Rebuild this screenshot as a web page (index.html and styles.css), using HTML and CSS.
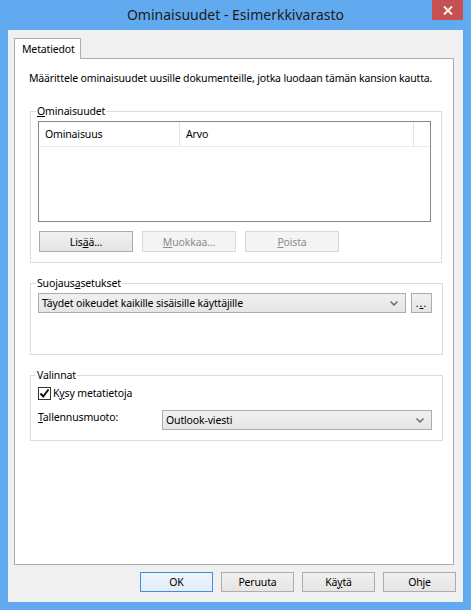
FILE: index.html
```html
<!DOCTYPE html>
<html lang="fi">
<head>
    <meta charset="UTF-8">
    <title>Ominaisuudet - Esimerkkivarasto</title>
    <link rel="stylesheet" href="styles.css">
</head>
<body>
    <div class="window">
        <div class="titlebar">
            <span></span>
            <div class="title">Ominaisuudet - Esimerkkivarasto</div>
            <button class="close" title="Sulje">
                <svg width="10" height="9" viewBox="0 0 10 9"><path d="M1 0.5 L9 8.5 M9 0.5 L1 8.5" stroke="#fff" stroke-width="1.8" fill="none"/></svg>
            </button>
        </div>

        <div class="client">
            <div class="tabs">
                <div class="tab">Metatiedot</div>
            </div>

            <div class="panel">
                <p class="intro">Määrittele ominaisuudet uusille dokumenteille, jotka luodaan tämän kansion kautta.</p>

                <fieldset class="group">
                    <legend><u>O</u>minaisuudet</legend>
                    <div class="listview">
                        <div class="lv-header">
                            <div class="lv-col col-name">Ominaisuus</div>
                            <div class="lv-col col-value">Arvo</div>
                            <div class="lv-col col-rest"></div>
                        </div>
                    </div>
                    <div class="btn-row">
                        <button class="btn btn-wide">Lis<u>ä</u>ä...</button>
                        <button class="btn btn-wide" disabled><u>M</u>uokkaa...</button>
                        <button class="btn btn-wide" disabled><u>P</u>oista</button>
                    </div>
                </fieldset>

                <fieldset class="group group-security">
                    <legend>Suojaus<u>a</u>setukset</legend>
                    <div class="combo-row">
                        <div class="combo combo-security">
                            <span>Täydet oikeudet kaikille sisäisille käyttäjille</span>
                            <svg class="chevron" width="8" height="5" viewBox="0 0 8 5"><path d="M0.5 0.5 L4 4 L7.5 0.5" stroke="#6d6d6d" stroke-width="1.5" fill="none"/></svg>
                        </div>
                        <button class="btn btn-dots">.<u>.</u>.</button>
                    </div>
                </fieldset>

                <fieldset class="group group-options">
                    <legend>Valinnat</legend>
                    <label class="check-row">
                        <span class="checkbox">
                            <svg width="11" height="11" viewBox="0 0 11 11"><path d="M1.5 5.5 L4.2 8.5 L9.5 1.5" stroke="#111" stroke-width="2" fill="none"/></svg>
                        </span>
                        <span>K<u>y</u>sy metatietoja</span>
                    </label>
                    <div class="field-row">
                        <span class="field-label"><u>T</u>allennusmuoto:</span>
                        <div class="combo combo-format">
                            <span>Outlook-viesti</span>
                            <svg class="chevron" width="8" height="5" viewBox="0 0 8 5"><path d="M0.5 0.5 L4 4 L7.5 0.5" stroke="#6d6d6d" stroke-width="1.5" fill="none"/></svg>
                        </div>
                    </div>
                </fieldset>
            </div>

            <div class="dialog-buttons">
                <button class="btn btn-default">OK</button>
                <button class="btn">Peruuta</button>
                <button class="btn">Kä<u>y</u>tä</button>
                <button class="btn">Ohje</button>
            </div>
        </div>
    </div>
</body>
</html>
```

FILE: styles.css
```css
body {
    margin: 0;
    font-family: "Noto Sans", "Open Sans", sans-serif;
    font-size: 10.5px;
    letter-spacing: -0.15px;
    color: #000;
    background-color: #fff;
}

.window {
    width: 471px;
    height: 610px;
    display: flex;
    flex-direction: column;
    box-sizing: border-box;
    background-color: #62aaf0;
    padding: 0 8px 8px 8px;
}

.titlebar {
    height: 30px;
    display: grid;
    grid-template-columns: 1fr auto 1fr;
    align-items: start;
}

.title {
    font-size: 14px;
    letter-spacing: 0;
    line-height: 30px;
    color: #1b1b1b;
    white-space: nowrap;
}

.close {
    justify-self: end;
    width: 31px;
    height: 20px;
    padding: 0;
    border: none;
    background-color: #c75050;
    display: flex;
    align-items: center;
    justify-content: center;
}

.client {
    flex: 1;
    display: flex;
    flex-direction: column;
    background-color: #f0f0f0;
    padding: 8px 7px 10px 6px;
}

.tabs {
    display: flex;
    height: 20px;
}

.tab {
    width: 67px;
    height: 21px;
    box-sizing: border-box;
    border: 1px solid #adadad;
    border-bottom: none;
    background-color: #fff;
    padding-left: 7px;
    line-height: 20px;
    position: relative;
    z-index: 1;
}

.panel {
    flex: 1;
    margin-right: 2px;
    background-color: #fff;
    border: 1px solid #adadad;
    padding: 11px 11px 0 15px;
}

.intro {
    margin: 0 0 17px -1px;
    line-height: 16px;
    white-space: nowrap;
}

.group {
    margin: 0;
    border: 1px solid #dcdcdc;
    padding: 0 10px 10px 7px;
}

.group + .group {
    margin-top: 12px;
}

.group legend {
    padding: 0 1px;
    margin-left: -2px;
    line-height: 16px;
}

.group-security {
    padding-bottom: 41px;
}

.listview {
    margin-top: 2px;
    height: 101px;
    box-sizing: border-box;
    border: 1px solid #828790;
    background-color: #fff;
}

.lv-header {
    display: flex;
    height: 24px;
    border-bottom: 1px solid #eaeaea;
}

.lv-col {
    line-height: 24px;
    padding-left: 6px;
    border-right: 1px solid #e5e5e5;
}

.col-name {
    width: 134px;
}

.col-value {
    width: 227px;
}

.col-rest {
    flex: 1;
    border-right: none;
}

.btn-row {
    display: flex;
    gap: 9px;
    margin-top: 9px;
    padding-left: 1px;
}

.btn {
    font-family: inherit;
    font-size: 10.5px;
    letter-spacing: -0.15px;
    color: #000;
    height: 20px;
    width: 73px;
    padding: 0;
    border: 1px solid #acacac;
    background: linear-gradient(#f0f0f0, #e5e5e5);
}

.btn-wide {
    width: 94px;
    height: 21px;
}

.btn:disabled {
    color: #8d8d8d;
    border-color: #d9d9d9;
    background: #f4f4f4;
}

.btn-default {
    border-color: #3d8ee0;
    background: linear-gradient(#eef4fb, #e3edf8);
}

.combo-row {
    display: flex;
    gap: 5px;
    margin-top: 2px;
}

.combo {
    height: 20px;
    box-sizing: border-box;
    border: 1px solid #acacac;
    background: linear-gradient(#f0f0f0, #e5e5e5);
    display: flex;
    align-items: center;
    justify-content: space-between;
    padding: 0 7px 0 3px;
    line-height: 18px;
}

.combo-security {
    width: 368px;
}

.combo-format {
    width: 270px;
}

.btn-dots {
    width: 21px;
    height: 20px;
    line-height: 14px;
    letter-spacing: 1px;
}

.check-row {
    display: flex;
    align-items: center;
    gap: 2px;
    margin-top: 2px;
    line-height: 16px;
}

.checkbox {
    width: 13px;
    height: 13px;
    box-sizing: border-box;
    border: 1px solid #333;
    background-color: #fff;
    display: flex;
    align-items: center;
    justify-content: center;
}

.field-row {
    display: flex;
    margin-top: 9px;
}

.field-label {
    width: 124px;
    line-height: 16px;
    margin-top: -1px;
}

.dialog-buttons {
    display: flex;
    justify-content: flex-end;
    gap: 8px;
    margin-top: 7px;
}
```
